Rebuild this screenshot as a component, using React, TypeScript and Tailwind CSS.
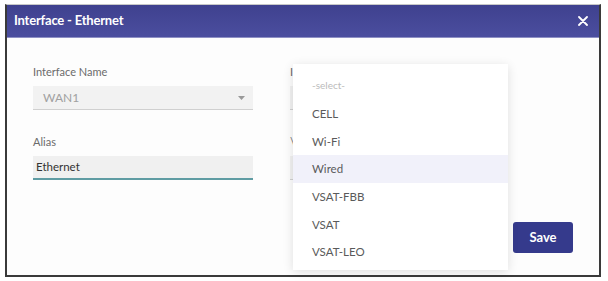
import React from "react";

const items = ["CELL", "Wi-Fi", "Wired", "VSAT-FBB", "VSAT", "VSAT-LEO"];

export default function App() {
  return (
    <div className="w-[608px] h-[281px] bg-white pt-[4px] pl-[5px]" style={{ fontFamily: "Lato, 'Open Sans', sans-serif" }}>
      <div className="w-[596px] h-[273px] border-t border-t-[#c8c8c8] border-x-2 border-b-2 border-x-[#3a3a3a] border-b-[#3a3a3a] flex flex-col bg-[#fdfdfd]">
        <div className="h-[33px] bg-gradient-to-b from-[#3f418f] to-[#4b4e9f] flex items-center justify-between pl-[7px] pr-[11px] border-b border-[#8e90c4]">
          <span className="text-white font-bold text-[13px] tracking-[-0.2px]">Interface - Ethernet</span>
          <svg width="10" height="10" viewBox="0 0 10 10">
            <path d="M1 1 L9 9 M9 1 L1 9" stroke="white" strokeWidth="1.8" strokeLinecap="round" />
          </svg>
        </div>
        <div className="relative flex-1 flex flex-col pl-[26px] pr-[26px] pt-[27px] pb-[22px]">
          <div className="grid grid-cols-[220px_212px] gap-x-[37px]">
            <div className="flex flex-col">
              <span className="text-[11px] text-[#6b6b6b] leading-[14px]">Interface Name</span>
              <div className="mt-[7px] h-[24px] bg-[#f2f2f2] border-b border-[#d0d0d0] flex items-center justify-between pl-[10px] pr-[8px]">
                <span className="text-[12px] text-[#a0a0a0]">WAN1</span>
                <svg width="7" height="4" viewBox="0 0 7 4"><path d="M0 0 L7 0 L3.5 4 Z" fill="#999" /></svg>
              </div>
            </div>
            <div className="flex flex-col">
              <span className="text-[11px] text-[#6b6b6b] leading-[14px]">I</span>
              <div className="mt-[7px] h-[24px] bg-[#f2f2f2] border-b border-[#d0d0d0]"></div>
            </div>
            <div className="flex flex-col mt-[25px]">
              <span className="text-[11px] text-[#6b6b6b] leading-[14px]">Alias</span>
              <div className="mt-[7px] h-[24px] bg-[#f0f0f0] border-b-2 border-[#5f9ca3] flex items-center pl-[3px]">
                <span className="text-[11.5px] text-[#333]">Ethernet</span>
              </div>
            </div>
            <div className="flex flex-col mt-[25px]">
              <span className="text-[11px] text-[#6b6b6b] leading-[14px]">\</span>
              <div className="mt-[7px] h-[24px] bg-[#f2f2f2] border-b border-[#d0d0d0]"></div>
            </div>
          </div>
          <div className="mt-auto flex justify-end">
            <button className="w-[60px] h-[31px] rounded-[3px] bg-[#353a8c] text-white font-bold text-[13px]">Save</button>
          </div>
          <div className="absolute left-[286px] top-[26px] w-[215px] h-[206px] bg-white shadow-[0_2px_10px_rgba(0,0,0,0.12)] pt-[8px]">
            <div className="h-[27.7px] flex items-center pl-[19px] text-[10px] text-[#bbb]">-select-</div>
            {items.map((it) => (
              <div key={it} className={`h-[27.7px] flex items-center pl-[19px] text-[11.5px] text-[#5a5a5a] ${it === "Wired" ? "bg-[#f1f1fa]" : ""}`}>
                {it}
              </div>
            ))}
          </div>
        </div>
      </div>
    </div>
  );
}
